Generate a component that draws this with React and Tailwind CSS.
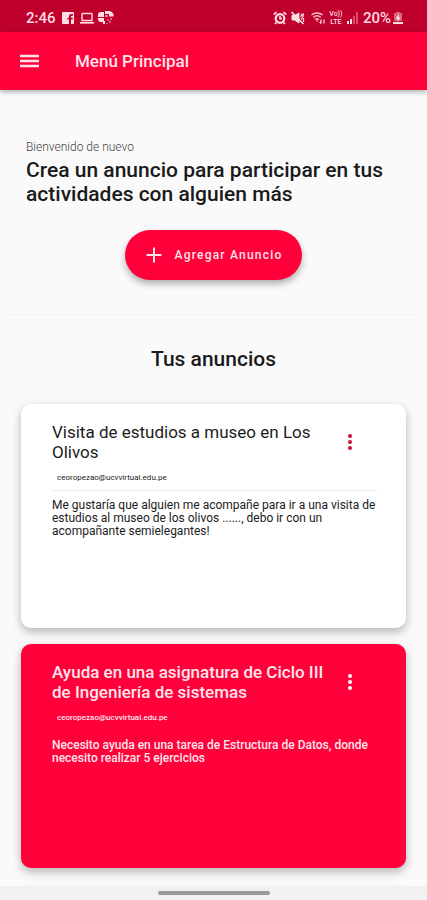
import React from "react";
import { clsx } from "clsx";

const ads = [
  {
    id: 1,
    title: "Visita de estudios a museo en Los Olivos",
    email: "ceoropezao@ucvvirtual.edu.pe",
    description:
      "Me gustaría que alguien me acompañe para ir a una visita de estudios al museo de los olivos ......, debo ir con un acompañante semielegantes!",
    variant: "light",
  },
  {
    id: 2,
    title: "Ayuda en una asignatura de Ciclo III de Ingeniería de sistemas",
    email: "ceoropezao@ucvvirtual.edu.pe",
    description:
      "Necesito ayuda en una tarea de Estructura de Datos, donde necesito realizar 5 ejercicios",
    variant: "red",
  },
];

function StatusBar() {
  return (
    <div className="flex h-8 items-center justify-between bg-[#bf002c] pt-1 pr-6 pl-[26px] text-[#ffdde3]">
      <div className="flex items-center gap-1">
        <span className="mr-0.5 text-[15px] leading-5 font-medium">2:46</span>

        {/* Facebook */}
        <svg className="h-3 w-3" viewBox="0 0 12 12" fill="currentColor" aria-hidden="true">
          <path
            fillRule="evenodd"
            d="M1 0h10a1 1 0 0 1 1 1v10a1 1 0 0 1-1 1H9V7.5h1.6l.3-1.8H9V4.6c0-.6.3-.9 1-.9h1V2H9.3C7.7 2 7 3 7 4.4v1.3H5.4v1.8H7V12H1a1 1 0 0 1-1-1V1a1 1 0 0 1 1-1z"
          />
        </svg>

        {/* Laptop */}
        <svg className="ml-0.5 h-3 w-[14px]" viewBox="0 0 14 12" fill="none" stroke="currentColor" aria-hidden="true">
          <rect x="2" y="1.5" width="10" height="7" rx="0.5" strokeWidth="1.4" />
          <path d="M0 10.8h14" strokeWidth="1.7" />
        </svg>

        {/* App notification */}
        <svg className="h-4 w-4" viewBox="0 0 16 16" fill="currentColor" aria-hidden="true">
          <path d="M0 7V5a3 3 0 0 1 3-3h3v5z" />
          <path d="M7 1h4a4.500 4.500 0 0 1 4.500 5.500H11V4H7z" />
          <path d="M0 8h6v3H7v3H5v-2H3a3 3 0 0 1-3-3z" />
          <path d="M7 5h3v2H7z" opacity="0.6" />
          <path d="M9 9h2v2H9zM12 8h2v2h-2zM11 11h2v2h-2zM8 13h2v1H8z" opacity="0.45" />
        </svg>
      </div>

      <div className="flex items-center gap-1">
        {/* Alarm */}
        <svg className="h-[14px] w-[14px]" viewBox="0 0 14 14" fill="none" stroke="currentColor" aria-hidden="true">
          <circle cx="7" cy="7.500" r="4.300" strokeWidth="2.200" />
          <path d="M7 5v2.700h2M.8 3.500 3.600 1.200M13.200 3.500l-2.800-2.300M3.500 11.500 2 13M10.500 11.500 12 13" strokeWidth="1.700" />
        </svg>

        {/* Sound off */}
        <svg className="h-[14px] w-[14px]" viewBox="0 0 14 14" fill="none" stroke="currentColor" aria-hidden="true">
          <path d="M1 4.500h2.500L8 2v10L3.500 9H1z" fill="currentColor" />
          <path d="M.5 1 12.500 13" strokeWidth="1.600" />
          <path d="M9.500 5.500c1-.2 1.500-1.500 1.500-3M10 8.500c1.500-1.500 2.500-3.500 2.500-6M12.500 7v4" strokeWidth="1.200" />
        </svg>

        {/* Wifi */}
        <svg className="ml-0.5 h-[14px] w-[14px]" viewBox="0 0 14 14" fill="none" stroke="currentColor" aria-hidden="true">
          <path d="M.5 4C3.500 1.300 8.500 1.300 11.500 4M2.200 6.300c2.200-1.900 5.400-1.900 7.600 0M4 8.500c1.200-1 2.800-1 4 0" strokeWidth="1.400" opacity="0.85" />
          <path d="M5 9.500h2.500L6.200 11z" fill="currentColor" stroke="none" />
          <path d="M10 8.500v4M8.700 11l1.300 1.500M13 8.500v4" strokeWidth="1.200" />
        </svg>

        {/* VoLTE */}
        <span className="flex w-[14px] flex-col items-center text-[7px] leading-[8px] font-medium">
          <span>Vo))</span>
          <span>LTE</span>
        </span>

        {/* Signal */}
        <svg className="h-3 w-3" viewBox="0 0 12 12" fill="currentColor" aria-hidden="true">
          <path d="M0 9h2v3H0zM3 7h2v5H3z" />
          <path d="M6 4h2v8H6zM9 0h2v12H9z" opacity="0.35" />
        </svg>

        <span className="flex items-center gap-0.5 text-[15px] leading-5 font-medium">
          20%
          {/* Battery */}
          <svg className="h-[14px] w-[10px]" viewBox="0 0 10 14" fill="currentColor" aria-hidden="true">
            <path d="M3 1h4v1h2v8H1V2h2z" opacity="0.45" />
            <path d="M0 11h10v2H0zM5.700 3 2.500 7.500h2V11l3.200-4.500h-2z" />
          </svg>
        </span>
      </div>
    </div>
  );
}

function Header() {
  return (
    <header className="flex h-[58px] items-center bg-[#ff003a] pl-5 text-[#ffe3e9] shadow-[0_2px_5px_rgba(0,0,0,0.3)]">
      <button type="button" aria-label="Abrir menú" className="flex h-5 w-5 items-center">
        <svg className="h-[14px] w-5" viewBox="0 0 20 14" fill="none" stroke="currentColor" strokeWidth="2.500">
          <path d="M0 2h19M0 7h19M0 12h19" />
        </svg>
      </button>
      <h1 className="ml-[35px] text-[17px] leading-6 font-medium">Menú Principal</h1>
    </header>
  );
}

function AdCard({ ad }) {
  const isRed = ad.variant === "red";

  return (
    <article
      className={clsx(
        "min-h-56 rounded-[10px] pt-[18px] pr-7 pb-6 pl-[31px] shadow-[0_4px_10px_rgba(0,0,0,0.28)]",
        isRed ? "bg-[#ff003a] text-[#ffe6eb]" : "bg-white text-[#1c1c1c]"
      )}
    >
      {/* Title and options */}
      <div className="flex items-center justify-between gap-4 pr-5">
        <h3 className={clsx("text-[17px] leading-5", isRed ? "font-medium" : "font-normal")}>
          {ad.title}
        </h3>
        <button
          type="button"
          aria-label="Opciones del anuncio"
          className={clsx("flex w-4 shrink-0 justify-center", isRed ? "text-white" : "text-[#d0103a]")}
        >
          <svg className="h-[18px] w-1" viewBox="0 0 4 18" fill="currentColor">
            <circle cx="2" cy="3" r="2" />
            <circle cx="2" cy="9" r="2" />
            <circle cx="2" cy="15" r="2" />
          </svg>
        </button>
      </div>

      <p className={clsx("mt-[10px] pl-[5px] text-[8px] leading-3", isRed ? "font-medium" : "font-normal")}>
        {ad.email}
      </p>

      <p
        className={clsx(
          "mt-1.5 border-t pt-2 text-xs leading-[13px]",
          isRed ? "border-transparent font-medium" : "border-[#ececec] font-normal"
        )}
      >
        {ad.description}
      </p>
    </article>
  );
}

export default function App() {
  return (
    <div className="flex min-h-screen flex-col bg-[#fafafa] font-['Roboto',sans-serif]">
      <StatusBar />
      <Header />

      <main className="flex-1 pb-[18px]">
        {/* Welcome */}
        <section className="px-[26px] pt-12">
          <p className="text-xs leading-[18px] font-light text-[#444444]">Bienvenido de nuevo</p>
          <h2 className="mt-0.5 text-[21px] leading-6 font-medium text-[#1a1a1a]">
            Crea un anuncio para participar en tus actividades con alguien más
          </h2>
          <div className="mt-6 flex justify-center">
            <button
              type="button"
              className="flex h-[50px] items-center gap-3 rounded-full bg-[#ff003a] px-5 text-xs font-medium tracking-widest text-[#ffe3e9] shadow-[0_4px_7px_rgba(0,0,0,0.3)]"
            >
              <svg className="h-[18px] w-[18px]" viewBox="0 0 18 18" fill="none" stroke="currentColor" strokeWidth="2">
                <path d="M9 1.500v15M1.500 9h15" />
              </svg>
              Agregar Anuncio
            </button>
          </div>
        </section>

        <hr className="mx-2 mt-[34px] border-[#f3f3f3]" />

        {/* Ads */}
        <section className="px-[21px] pt-[30px]">
          <h2 className="text-center text-[21px] leading-7 font-medium text-[#1a1a1a]">Tus anuncios</h2>
          <div className="mt-[31px] flex flex-col gap-4">
            {ads.map((ad) => (
              <AdCard key={ad.id} ad={ad} />
            ))}
          </div>
        </section>
      </main>

      {/* Gesture bar */}
      <div className="flex h-[14px] items-center justify-center bg-[#f1f1f1]">
        <div className="h-1 w-28 rounded-full bg-[#9a9a9a]" />
      </div>
    </div>
  );
}
